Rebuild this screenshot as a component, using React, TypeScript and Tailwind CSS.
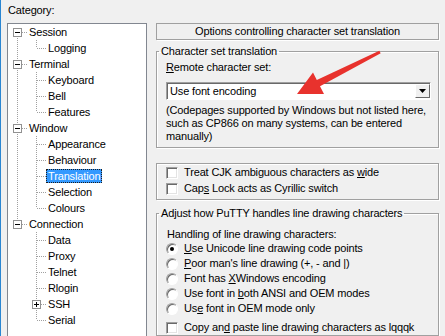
import type { ReactNode } from "react";

type Node = {
  label: ReactNode;
  level: 0 | 1;
  expander?: "-" | "+";
  selected?: boolean;
};

const tree: Node[] = [
  { label: "Session", level: 0, expander: "-" },
  { label: "Logging", level: 1 },
  { label: "Terminal", level: 0, expander: "-" },
  { label: "Keyboard", level: 1 },
  { label: "Bell", level: 1 },
  { label: "Features", level: 1 },
  { label: "Window", level: 0, expander: "-" },
  { label: "Appearance", level: 1 },
  { label: "Behaviour", level: 1 },
  { label: "Translation", level: 1, selected: true },
  { label: "Selection", level: 1 },
  { label: "Colours", level: 1 },
  { label: "Connection", level: 0, expander: "-" },
  { label: "Data", level: 1 },
  { label: "Proxy", level: 1 },
  { label: "Telnet", level: 1 },
  { label: "Rlogin", level: 1 },
  { label: "SSH", level: 1, expander: "+" },
  { label: "Serial", level: 1 },
];

const ROW = 16;

function TreeLines() {
  const lines: ReactNode[] = [];
  const boxes: ReactNode[] = [];
  const tops = tree.map((n, i) => (n.level === 0 ? i : -1)).filter((i) => i >= 0);
  const lastTop = tops[tops.length - 1];

  // trunk joining the top-level expanders
  lines.push(
    <line key="trunk" x1={9.5} x2={9.5} y1={8} y2={lastTop * ROW + 8} />,
  );

  tree.forEach((n, i) => {
    const cy = i * ROW + 8.5;
    if (n.level === 0) {
      lines.push(<line key={`h${i}`} x1={14} x2={20} y1={cy} y2={cy} />);
      // children column
      let last = i;
      for (let j = i + 1; j < tree.length && tree[j].level === 1; j++) last = j;
      if (last > i) {
        lines.push(
          <line key={`v${i}`} x1={28.5} x2={28.5} y1={i * ROW + 16} y2={last * ROW + 8} />,
        );
      }
    } else {
      lines.push(<line key={`h${i}`} x1={29} x2={39} y1={cy} y2={cy} />);
    }

    if (n.expander) {
      const bx = n.level === 0 ? 5.5 : 24.5;
      const mid = bx + 4;
      boxes.push(
        <g key={`b${i}`}>
          <rect x={bx} y={i * ROW + 4.5} width={8} height={8} fill="white" stroke="#919191" />
          <line x1={bx + 1.5} x2={bx + 6.5} y1={cy} y2={cy} stroke="black" />
          {n.expander === "+" && (
            <line x1={mid} x2={mid} y1={i * ROW + 6} y2={i * ROW + 11} stroke="black" />
          )}
        </g>,
      );
    }
  });

  return (
    <svg
      className="pointer-events-none absolute left-0 top-0"
      width={138}
      height={tree.length * ROW}
      shapeRendering="crispEdges"
    >
      <g stroke="#a0a0a0" strokeDasharray="1 1">
        {lines}
      </g>
      {boxes}
    </svg>
  );
}

function Tree() {
  return (
    <div className="relative h-[320px] w-[140px] border border-[#828790] bg-white">
      <TreeLines />
      <div className="relative flex flex-col">
        {tree.map((n, i) => (
          <div
            key={i}
            className={`flex h-[16px] items-center ${n.level === 0 ? "pl-[21px]" : "pl-[38px]"}`}
          >
            {n.level === 0 ? (
              <span>{n.label}</span>
            ) : (
              <span
                className={
                  n.selected
                    ? "flex h-[14px] items-center bg-[#3399ff] px-[2px] text-white outline-1 -outline-offset-1 outline-dotted outline-[#1d1d1d]"
                    : "px-[2px]"
                }
              >
                {n.label}
              </span>
            )}
          </div>
        ))}
      </div>
    </div>
  );
}

function Checkbox() {
  return (
    <span className="h-[12px] w-[12px] shrink-0 border border-b-white border-l-[#a0a0a0] border-r-white border-t-[#a0a0a0] bg-white shadow-[inset_1px_1px_0_#696969,inset_-1px_-1px_0_#e3e3e3]" />
  );
}

function Radio({ checked }: { checked?: boolean }) {
  return (
    <span className="flex h-[12px] w-[12px] shrink-0 items-center justify-center rounded-full border border-b-white border-l-[#a0a0a0] border-r-white border-t-[#a0a0a0] bg-white shadow-[inset_1px_1px_0_#696969]">
      {checked && <span className="h-[4px] w-[4px] rounded-full bg-black" />}
    </span>
  );
}

function Option({ control, children }: { control: ReactNode; children: ReactNode }) {
  return (
    <div className="flex h-[15px] items-center gap-[6px]">
      {control}
      <span>{children}</span>
    </div>
  );
}

const etched =
  "border border-[#a0a0a0] shadow-[inset_1px_1px_0_white,1px_1px_0_white]";

export default function App() {
  return (
    <div className="relative flex h-[336px] w-[445px] overflow-hidden border-l border-[#2a86d2] bg-[#f0f0f0] font-['Liberation_Sans',Arial,sans-serif] text-[11px] leading-[13px] tracking-[-0.15px] text-black">
      <div className="flex flex-col pl-[6px]">
        <div className="h-[13px] mt-[4px] pl-[1px]">
          Cate<u>g</u>ory:
        </div>
        <div className="mt-[6px]">
          <Tree />
        </div>
      </div>

      <div className="ml-[9px] flex w-[283px] flex-col">
        <div className="mt-[23px] flex h-[18px] items-center justify-center border border-[#a0a0a0] shadow-[1px_1px_0_white]">
          Options controlling character set translation
        </div>

        <fieldset className={`mt-[5px] ${etched}`}>
          <legend className="ml-[2px] px-[2px]">Character set translation</legend>
          <div className="flex flex-col pl-[9px] pr-[7px] pb-[4px] pt-[3px]">
            <div className="h-[13px]">
              <u>R</u>emote character set:
            </div>
            <div className="mt-[8px] flex h-[18px] items-stretch border border-b-white border-l-[#a0a0a0] border-r-white border-t-[#a0a0a0] bg-white shadow-[inset_1px_1px_0_#696969]">
              <span className="flex flex-1 items-center pl-[3px] pt-[1px]">Use font encoding</span>
              <span className="my-[1px] flex w-[15px] items-center justify-center border border-b-[#696969] border-l-white border-r-[#696969] border-t-white bg-[#f0f0f0]">
                <svg width="7" height="4" viewBox="0 0 7 4">
                  <path d="M0 0h7L3.5 4z" fill="black" />
                </svg>
              </span>
            </div>
            <p className="mt-[4px]">
              (Codepages supported by Windows but not listed here, such as CP866 on many
              systems, can be entered manually)
            </p>
          </div>
        </fieldset>

        <div className={`mt-[15px] flex flex-col gap-[1px] pb-[3px] pl-[9px] pt-[1px] ${etched}`}>
          <Option control={<Checkbox />}>
            Treat CJK ambiguous characters as <u>w</u>ide
          </Option>
          <Option control={<Checkbox />}>
            Cap<u>s</u> Lock acts as Cyrillic switch
          </Option>
        </div>

        <fieldset className={`mt-[7px] ${etched}`}>
          <legend className="ml-[2px] px-[2px]">Adjust how PuTTY handles line drawing characters</legend>
          <div className="flex flex-col pl-[9px] pt-[8px]">
            <div className="h-[13px] pl-[1px]">Handling of line drawing characters:</div>
            <Option control={<Radio checked />}>
              <u>U</u>se Unicode line drawing code points
            </Option>
            <Option control={<Radio />}>
              <u>P</u>oor man's line drawing (+, - and |)
            </Option>
            <Option control={<Radio />}>
              Font has <u>X</u>Windows encoding
            </Option>
            <Option control={<Radio />}>
              Use font in <u>b</u>oth ANSI and OEM modes
            </Option>
            <Option control={<Radio />}>
              Us<u>e</u> font in OEM mode only
            </Option>
            <div className="mt-[4px]">
              <Option control={<Checkbox />}>
                Copy an<u>d</u> paste line drawing characters as lqqqk
              </Option>
            </div>
          </div>
        </fieldset>
      </div>

      {/* red annotation arrow drawn over the dialog */}
      <svg className="pointer-events-none absolute left-0 top-0" width={445} height={336}>
        <polygon
          points="296,94 323,94 319,86.3 379.7,53.3 378.3,50.7 315.8,80.1 312,72.5"
          fill="#e8322d"
        />
      </svg>
    </div>
  );
}
